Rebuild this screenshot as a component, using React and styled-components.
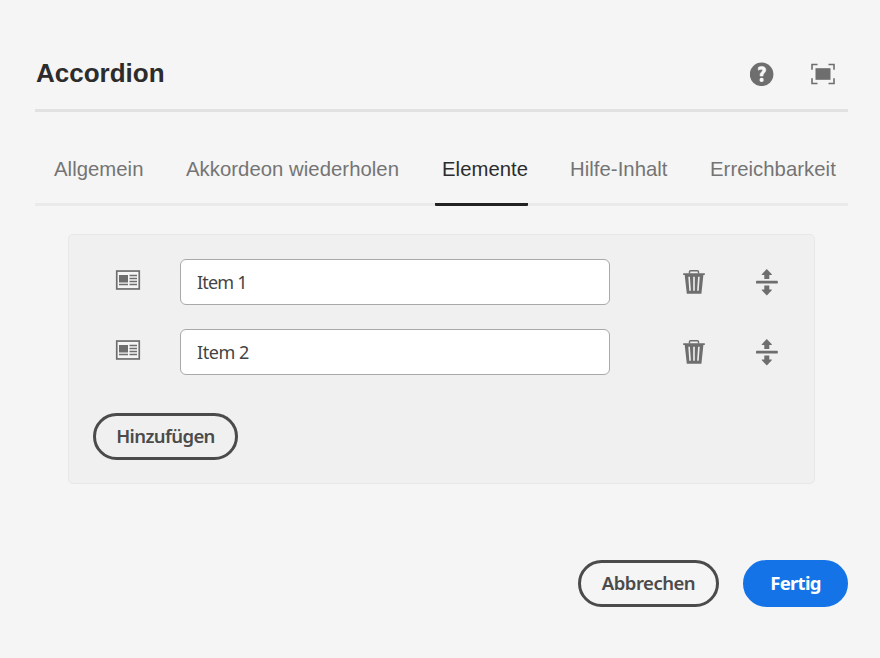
import React, { useState } from "react";
import styled, { createGlobalStyle } from "styled-components";

const GlobalStyle = createGlobalStyle`
  *, *::before, *::after { box-sizing: border-box; }
  body { margin: 0; background: #f5f5f5; }
  button, input { margin: 0; font: inherit; }
`;

const Dialog = styled.main`
  width: 880px;
  height: 658px;
  padding: 36px 32px 0 35px;
  display: flex;
  flex-direction: column;
  background: #f5f5f5;
  font-family: "Liberation Sans", Arial, sans-serif;
  color: #2c2c2c;
`;

const Header = styled.header`
  display: flex;
  align-items: center;
  height: 76px;
  border-bottom: 3px solid #e1e1e1;
`;

const Title = styled.h1`
  margin: 1px auto 0 0;
  padding-left: 1px;
  font-size: 26px;
  line-height: 32px;
  font-weight: 700;
`;

const IconButton = styled.button`
  display: flex;
  align-items: center;
  justify-content: center;
  width: 26px;
  height: 28px;
  padding: 0;
  border: 0;
  background: none;
  color: #6e6e6e;
  svg { display: block; }
`;

const HeaderActions = styled.div`
  display: flex;
  gap: 35px;
  margin: 2px 12px 0 0;
`;

const Tabs = styled.nav`
  display: flex;
  height: 94px;
  padding: 36px 0 0 12px;
  border-bottom: 3px solid #eaeaea;
`;

const Tab = styled.button`
  flex: none;
  width: ${(p) => p.$width}px;
  height: 58px;
  margin-right: ${(p) => p.$gap}px;
  padding: 0 0 14px 7px;
  border: 0;
  border-bottom: 3px solid ${(p) => (p.$active ? "#222" : "transparent")};
  border-radius: 1px;
  background: none;
  color: ${(p) => (p.$active ? "#2c2c2c" : "#747474")};
  font-size: 20.3px;
  line-height: 24px;
  letter-spacing: 0.05px;
  text-align: left;
  white-space: nowrap;
`;

const Panel = styled.section`
  width: 747px;
  height: 250px;
  margin: 28px 0 0 33px;
  padding: 24px;
  border: 1px solid #e7e7e7;
  border-radius: 5px;
  background: #f0f0f0;
`;

const Row = styled.div`
  display: flex;
  align-items: center;
  height: 46px;
  margin-bottom: 24px;
  padding-left: 22px;
`;

const RowIcon = styled.span`
  width: 26px;
  margin: 0 39px 4px 0;
  color: #6e6e6e;
  svg { display: block; }
`;

const TextField = styled.input`
  width: 430px;
  height: 46px;
  margin-right: 71px;
  padding: 0 16px;
  border: 1px solid #a9a9a9;
  border-radius: 6px;
  outline: 0;
  background: #fff;
  color: #444;
  font-family: "Noto Sans", sans-serif;
  font-size: 18px;
  letter-spacing: ${(p) => p.$tracking}px;
`;

const RowAction = styled(IconButton)`
  margin-right: ${(p) => p.$gap || 0}px;
`;

const Pill = styled.button`
  display: flex;
  align-items: center;
  justify-content: center;
  width: ${(p) => p.$width}px;
  height: 47px;
  padding: 0 0 3px;
  border: 3px solid ${(p) => (p.$primary ? "#1473e6" : "#4b4b4b")};
  border-radius: 24px;
  background: ${(p) => (p.$primary ? "#1473e6" : "transparent")};
  color: ${(p) => (p.$primary ? "#fff" : "#4b4b4b")};
  font-family: "Noto Sans", sans-serif;
  font-size: 18.5px;
  font-weight: ${(p) => (p.$primary ? 700 : 600)};
  letter-spacing: ${(p) => p.$tracking}px;
`;

const AddRow = styled.div`
  padding-top: 14px;
`;

const Footer = styled.footer`
  display: flex;
  justify-content: flex-end;
  gap: 24px;
  margin-top: 76px;
`;

const HelpIcon = () => (
  <svg width="24" height="24" viewBox="0 0 24 24">
    <circle cx="11.6" cy="12.3" r="11.8" fill="currentColor" />
    <path d="M8.3 5.4c1-.7 2.2-1 3.4-1 2.6 0 4.1 1.3 4.1 3.4 0 1.6-.8 2.5-1.7 3.4-.8.7-1.1 1.2-1 2.4v.4h-3v-.7c-.1-1.3.3-2.1 1.3-3.1.8-.8 1.1-1.2 1.1-1.9s-.5-1-1.3-1c-.9 0-1.9.3-2.9.9z" fill="#f7f7f7" stroke="#f7f7f7" strokeWidth=".6" />
    <circle cx="11.6" cy="17.9" r="2.1" fill="#f7f7f7" />
  </svg>
);

const FullScreenIcon = () => (
  <svg width="26" height="22" viewBox="0 0 26 22">
    <rect x="5.5" y="5.2" width="15" height="11.6" fill="currentColor" />
    <path d="M2 6.7V1.5h5.5M18.5 1.5H24v5.2M2 15.3v5.2h5.5M18.5 20.5H24v-5.2" fill="none" stroke="currentColor" strokeWidth="1.6" />
  </svg>
);

const ArticleIcon = () => (
  <svg width="26" height="20" viewBox="0 0 26 20">
    <rect x="1.75" y="1.05" width="22.5" height="17.9" fill="#f5f5f5" stroke="currentColor" strokeWidth="1.7" />
    <path d="M4 5h9v7.5H4z" fill="currentColor" />
    <path d="M14.5 5.5H22M14.5 8.5H22M14.5 11.5H22M4 14.5h9M14.5 14.5H22" stroke="currentColor" strokeWidth="1.5" />
  </svg>
);

const TrashIcon = () => (
  <svg width="24" height="26" viewBox="0 0 24 26">
    <path d="M7.5 4.5V2.7Q7.5 1.7 8.5 1.7h7q1 0 1 1V4.5" fill="none" stroke="currentColor" strokeWidth="1.4" />
    <path d="M1.2 4.2h21.6V6h-1.4l-2 18.7H4.8L2.7 6H1.2z" fill="currentColor" />
    <path d="M7.1 7.8l1 14M12 7.8v14M16.9 7.8l-1 14" stroke="#f0f0f0" strokeWidth="1.6" />
  </svg>
);

const MoveIcon = () => (
  <svg width="24" height="28" viewBox="0 0 24 28">
    <rect x="1" y="12.8" width="21.8" height="2.8" rx=".7" fill="currentColor" />
    <path d="M11.8 1l5 5.2v.8h-2.5v4H9.3V7H6.8v-.8zM11.8 27.4l5-5.2v-.8h-2.5v-4H9.3v4H6.8v.8z" fill="currentColor" />
  </svg>
);

const TABS = [
  { label: "Allgemein", width: 97, gap: 35 },
  { label: "Akkordeon wiederholen", width: 220, gap: 36 },
  { label: "Elemente", width: 93, gap: 35 },
  { label: "Hilfe-Inhalt", width: 105, gap: 35 },
  { label: "Erreichbarkeit", width: 133, gap: 0 },
];

const ITEMS = [
  { label: "Item 1", tracking: -0.8 },
  { label: "Item 2", tracking: -0.45 },
];

export default function App() {
  const [active, setActive] = useState("Elemente");
  return (
    <>
      <GlobalStyle />
      <Dialog>
        <Header>
          <Title>Accordion</Title>
          <HeaderActions>
            <IconButton aria-label="Hilfe"><HelpIcon /></IconButton>
            <IconButton aria-label="Vollbild"><FullScreenIcon /></IconButton>
          </HeaderActions>
        </Header>
        <Tabs>
          {TABS.map((t) => (
            <Tab key={t.label} $width={t.width} $gap={t.gap} $active={t.label === active} onClick={() => setActive(t.label)}>
              {t.label}
            </Tab>
          ))}
        </Tabs>
        <Panel>
          {ITEMS.map((item) => (
            <Row key={item.label}>
              <RowIcon><ArticleIcon /></RowIcon>
              <TextField defaultValue={item.label} $tracking={item.tracking} />
              <RowAction $gap={47} aria-label="Löschen"><TrashIcon /></RowAction>
              <RowAction aria-label="Verschieben"><MoveIcon /></RowAction>
            </Row>
          ))}
          <AddRow>
            <Pill $width={145} $tracking={-0.6}>Hinzufügen</Pill>
          </AddRow>
        </Panel>
        <Footer>
          <Pill $width={141} $tracking={-0.5}>Abbrechen</Pill>
          <Pill $width={105} $tracking={-0.7} $primary>Fertig</Pill>
        </Footer>
      </Dialog>
    </>
  );
}
